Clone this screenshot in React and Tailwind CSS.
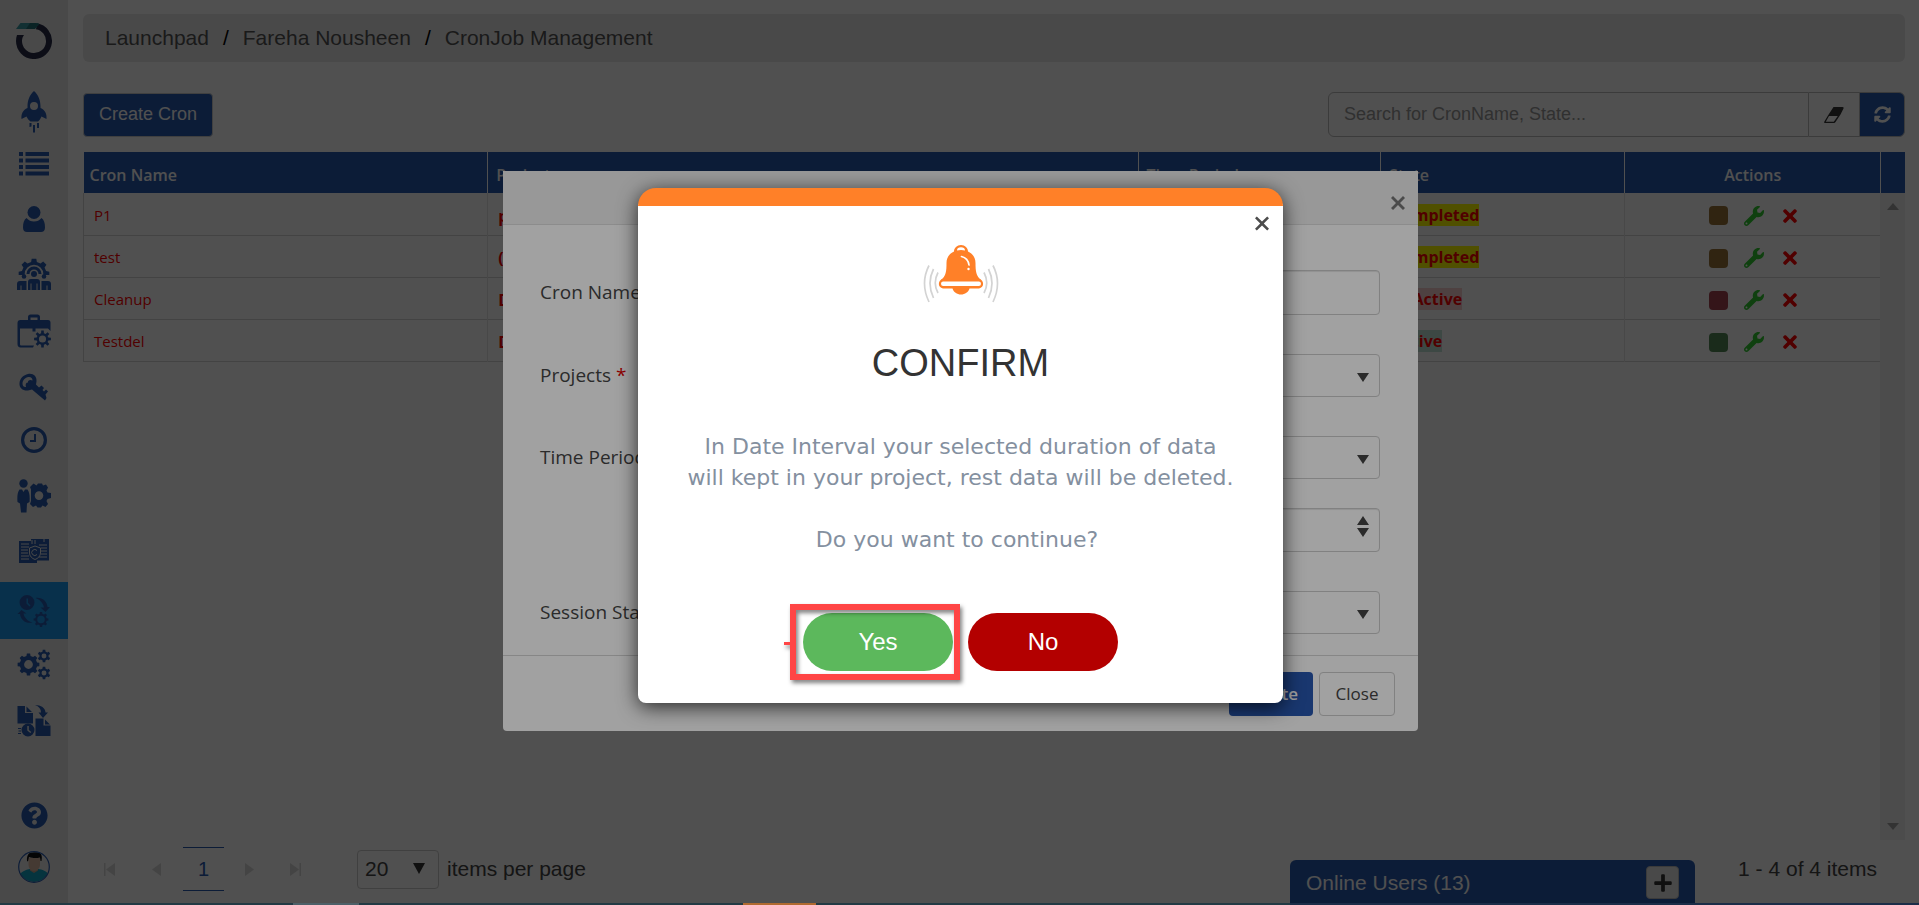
/**
 * CronJob Management — cron list, the create form and its confirm dialog.
 */
import { FaSyncAlt, FaWrench, FaTimes, FaPlus, FaUser, FaQuestionCircle } from "react-icons/fa";

// closed path of a cog with square teeth and a hole
function cogPath(cx, cy, r, teeth = 8, hole = 0.4, root = 0.76) {
  const step = (Math.PI * 2) / teeth;
  const pts = [];
  for (let i = 0; i < teeth; i++) {
    const a = i * step - Math.PI / 2;
    [[-0.3, root], [-0.19, 1], [0.19, 1], [0.3, root]].forEach(([t, k]) => {
      pts.push(`${(cx + Math.cos(a + t * step) * r * k).toFixed(2)} ${(cy + Math.sin(a + t * step) * r * k).toFixed(2)}`);
    });
  }
  const h = r * hole;
  return `M${pts.join("L")}ZM${cx - h} ${cy}a${h} ${h} 0 1 0 ${h * 2} 0a${h} ${h} 0 1 0 ${-h * 2} 0Z`;
}

function Svg({ w = 34, h = 34, children }) {
  return (
    <svg width={w} height={h} viewBox={`0 0 ${w} ${h}`} fill="currentColor" fillRule="evenodd" aria-hidden="true">
      {children}
    </svg>
  );
}

const Logo = () => (
  <Svg w={36} h={36}>
    <path d="M0 18H0C0 15.800 .4 13.800 1 12H8C6.600 13.800 6 15.800 6 18a12 12 0 1 0 14-11.800L21 .3A18 18 0 1 1 0 18Z" fill="#262b48" />
    <path d="M4.500 0H18C20 0 21.500 .2 22.500 .6L18 6H0Z" fill="#3a9aa3" />
    <path d="M14 0H18C20 0 22 .3 23.500 .9L19 6H10Z" fill="#217078" />
  </Svg>
);

const Rocket = () => (
  <Svg w={26} h={42}>
    <path d="M13 0C17.500 4 19.500 9.500 19.500 15.500L19.500 17C24 19 26 22.500 25.500 28L20.500 25.500C19.500 27.500 18.500 29.500 17 30.500H9.500C8 29.500 6.500 27.500 5.500 25.500L.5 28C0 22.500 2 19 6.500 17V15.500C6.500 9.500 8.500 4 13 0ZM13 11a4 4 0 1 0 0 8a4 4 0 1 0 0-8Z" />
    <path d="M8.500 32h2v3.500H9.500V36H8.500ZM16 32h2v5h-2ZM12 34h2v7.500h-2Z" />
  </Svg>
);

const List = () => (
  <Svg w={30} h={24}>
    <path d="M0 0h4v4H0ZM6.500 0H30v4H6.500ZM0 6.500h4v4H0ZM6.500 6.500H30v4H6.500ZM0 13h4v4H0ZM6.500 13H30v4H6.500ZM0 19.500h4v4H0ZM6.500 19.500H30v4H6.500Z" />
  </Svg>
);

// bust with a round head, shoulders flat at the bottom
const User = () => (
  <Svg w={22} h={26}>
    <circle cx="11" cy="6.500" r="6.500" />
    <path d="M3.500 12C5.500 14.500 8 15.500 11 15.500S16.500 14.500 18.500 12C21 13.500 22 17 22 21.500C22 24.500 20.500 26 18 26H4C1.500 26 0 24.500 0 21.500C0 17 1 13.500 3.500 12Z" />
  </Svg>
);

const TeamGear = () => (
  <Svg w={34} h={33}>
    <clipPath id="team-clip"><path d="M0 0H34V17H0Z" /></clipPath>
    <path d={cogPath(17, 16, 15.5, 8, 0.6, 0.8)} clipPath="url(#team-clip)" />
    <path d="M9.500 16a7.500 7.500 0 0 1 15 0h-3a4.500 4.500 0 0 0-9 0Z" />
    <circle cx="17" cy="16" r="3" />
    <circle cx="7" cy="18.500" r="2.300" />
    <circle cx="27" cy="18.500" r="2.300" />
    <path d="M11 32V24C11 22 12 21 14 21H20C22 21 23 22 23 24V32H20.500V25.500h-1V32h-5V25.500h-1V32ZM0 32V26C0 24 1 23 3 23H9.500V32H4.500V27.500h-1V32ZM34 32V26C34 24 33 23 31 23H24.500V32h5V27.500h1V32Z" />
  </Svg>
);

const CaseGear = () => (
  <Svg>
    <path d="M11 6V3C11 1.500 12 .5 13.500 .5h7C22 .5 23 1.500 23 3V6H31C32.700 6 33.500 7 33.500 8.500V17L31 14.500H18.500V17.500H15.500V14.500H3V30C3 31 3.500 31.500 4.500 31.500H17L16 33.500H3.500C1.500 33.500 .5 32 .5 30V9C.5 7 1.500 6 3.500 6ZM13.500 6h7V3.500h-7Z" />
    <path d={cogPath(25.5, 25, 8.5, 8, 0.42, 0.7)} />
  </Svg>
);

const Key = () => (
  <Svg w={30} h={28}>
    <path d="M9 1C14 0 18 3 17.500 8.500L17 11.500L20 14.500L22.500 12.500L25 15L23.500 17L25 18.500L27 16.500L29 18.500L26.500 21.500L27.500 25L26 27.500L13 16.500L9 17.500C4 18 0 15 .5 10C1 5 4.500 2 9 1ZM9.500 4C6 4.500 3.500 7.500 3.500 10.500C3.500 13 5 14.200 7 14C6 11.500 7 9.500 9 9.500C8.500 7.500 11 6 13.500 7.500C13.500 5 12 3.800 9.500 4Z" />
  </Svg>
);

const Clock = () => (
  <Svg w={26} h={26}>
    <path d="M13 0a13 13 0 1 1 0 26a13 13 0 1 1 0-26ZM13 3.200a9.800 9.800 0 1 0 0 19.600a9.800 9.800 0 1 0 0-19.600Z" />
    <path d="M13 7h2v8H9v-2h4Z" />
  </Svg>
);

const PersonGear = () => (
  <Svg>
    <circle cx="6.500" cy="4.500" r="4.200" />
    <path d="M2.500 10.500H5L6.500 13L8 10.500H10.500C12.500 13 13 18 12.500 23L10 24.500L9.500 33.500H4L3 24.500L.5 23C0 18 .5 13 2.500 10.500Z" />
    <path d="M14 10.500L13 8L16.500 4.500L19.500 6.500L21 4.500H25L26 6.500L29 5.500L31 8.500L29.500 11.500L30.500 13.500L34 14V19L30.500 20L29.500 22L31 25L28.500 28L25.500 26.500L24 28.500H20.500L19 26.500L16 28L13 25L14 22ZM22 12.300a4.300 4.300 0 1 0 0 8.600a4.300 4.300 0 1 0 0-8.600Z" />
  </Svg>
);

const License = () => (
  <Svg w={30} h={25}>
    <path d="M0 2H12V0H30V21.500H18V24H0Z" />
    <g stroke="#e9e9e9" strokeWidth="1" fill="none">
      <path d="M2 5h8M2 8h8M2 11h7M2 14h7M2 17h8M2 20h8M20 6h8M22 9h6M22 12h6M22 15h6M20 18h8M13 1v4M16 1v4M25 0v3" />
      <path d="M16 7L21.500 9V14C21.500 17 19 19.500 16 20.500C13 19.500 10.500 17 10.500 14V9Z" />
      <path d="M18 11.500a3 3 0 1 0 0 4" />
    </g>
  </Svg>
);

const CronCycle = () => (
  <Svg>
    <path d="M10 1a7.500 7.500 0 1 1 0 15a7.500 7.500 0 1 1 0-15ZM9.500 4.500V9.500L12.500 12.500L13.500 11.500L11 8.800V4.500Z" />
    <path d="M18.500 4C25 3 30 7 30.500 13H33L28.500 18L23.500 13.500L27 13.500C26 9 23 5.500 18.500 4ZM15.500 28.500C9 30 3.500 26 3 20H.5L4.500 16L9.500 19.500H6.500C7.500 24 11 27.500 15.500 28.500Z" />
    <path d={cogPath(24, 25.5, 7.5, 8, 0.5, 0.78)} />
  </Svg>
);

const Gears = () => (
  <Svg>
    <path d={cogPath(11.5, 15.5, 11, 8, 0.4, 0.8)} />
    <path d={cogPath(27, 7, 6.5, 6, 0.38, 0.72)} />
    <path d={cogPath(27, 24, 6.5, 6, 0.38, 0.72)} />
  </Svg>
);

const FileMove = () => (
  <Svg>
    <path d="M.5 2H8V9H16V19.500H.5ZM9.500 2.500L15 8H9.500Z" />
    <path d="M18.500 14.500H26.500V21.500H33.500V32H18.500ZM28 15.500L33 20.500H28Z" />
    <path d="M18 1C24 1 28.500 4 28.500 8.500H31L26 14L21.500 8.500H24C24 5 22 2.500 18 1Z" />
    <path d="M11 19.500a6.500 6.500 0 1 1 0 13a6.500 6.500 0 1 1 0-13ZM10.300 22v4.500l3 2.500l1-1l-2.500-2V22ZM1 24h3v1H1ZM1.500 26.500h2.500v1H1.500ZM1 29h3v1H1Z" />
  </Svg>
);

const Avatar = () => (
  <Svg w={32} h={32}>
    <clipPath id="avatar-clip"><circle cx="16" cy="16" r="15" /></clipPath>
    <g clipPath="url(#avatar-clip)">
      <path d="M1 32V24C4 20 9 18.500 12 18H20C24 18.500 29 20 31 24V32Z" fill="#13a6c4" />
      <path d="M12 15h8v4.500L16 22L12 19.500Z" fill="#c9a08a" />
      <path d="M10.500 7h11.500v7C22 17 19 20 16 20s-5.500-3-5.500-6Z" fill="#dcb9a4" />
      <path d="M9 10C8.500 4 11 1.500 14 1.500L20 1C23.500 2 24.500 5 23.500 10H22.500L22 6.500C18 7.500 14 7 11 6L10 10.500Z" fill="#111" />
    </g>
    <circle cx="16" cy="16" r="15.300" fill="none" stroke="#2a5cb0" strokeWidth="1.200" />
  </Svg>
);

const Eraser = () => (
  <Svg w={20} h={16}>
    <path d="M9.500 0H18.500Q20 0 19.500 1.500L16.500 7.500L11.500 15Q11 16 10 16H1Q-.2 16 .4 14.600L4 8.500ZM5 9L1.800 14.700H9.800L13.800 9Z" />
  </Svg>
);

const Bell = () => (
  <Svg w={76} h={60}>
    <g fill="none" stroke="#d3d3d3" strokeWidth="1.700">
      <path d="M15 27.500Q9.500 38 15 48M10.500 24Q3.500 38 10.500 53M6 20.500Q-3 38 6 57" />
      <path d="M61 27.500Q66.500 38 61 48M65.500 24Q72.500 38 65.500 53M70 20.500Q79 38 70 57" />
    </g>
    <g fill="#ff8028">
      <path d="M38 0C42 0 45 3 45 6.500C50.500 9 52.500 13.500 52.500 18C52.500 26 53 31 58 35H18C23 31 23.500 26 23.500 18C23.500 13.500 25.500 9 31 6.500C31 3 34 0 38 0ZM34 5.500Q38 4.500 42 5.500C42 3.500 40.500 2.300 38 2.300S34 3.500 34 5.500Z" />
      <path d="M20 33.500H56C61.500 35.500 61.500 42.500 56 43.500H46.500C45.500 47 42 49.500 38 49.500S30.500 47 29.500 43.500H20C14.500 42.500 14.500 35.500 20 33.500Z" />
    </g>
    <rect x="18" y="36.500" width="40" height="4.500" rx="2.200" fill="#fff" />
    <path d="M38.500 11.500Q45 13 46 20" fill="none" stroke="#fff" strokeWidth="1.700" strokeLinecap="round" />
    <circle cx="45.500" cy="24" r="1.200" fill="#fff" />
  </Svg>
);

const NAV = [
  { label: "Launchpad", icon: Rocket, height: "h-[60px]" },
  { label: "Lists", icon: List, height: "h-[44px]" },
  { label: "Profile", icon: User, height: "h-[66px]" },
  { label: "Team settings", icon: TeamGear, height: "h-[44px]" },
  { label: "Projects", icon: CaseGear, height: "h-[70px]" },
  { label: "Keys", icon: Key, height: "h-[42px]" },
  { label: "History", icon: Clock, height: "h-[64px]" },
  { label: "User settings", icon: PersonGear, height: "h-[48px]" },
  { label: "Licenses", icon: License, height: "h-[62px]" },
  { label: "CronJob Management", icon: CronCycle, height: "h-[57px]", active: true },
  { label: "Settings", icon: Gears, height: "h-[54px]" },
  { label: "File transfer", icon: FileMove, height: "h-[56px]" },
];

const CRONS = [
  { name: "P1", project: "p1", period: "30 Days", state: "Completed", mark: "bg-[#ffff00]", box: "bg-[#997438]" },
  { name: "test", project: "(test)", period: "1 Month", state: "Completed", mark: "bg-[#ffff00]", box: "bg-[#997438]" },
  { name: "Cleanup", project: "Demo", period: "7 Days", state: "In Active", mark: "bg-[#f8cfcf]", box: "bg-[#a54352]" },
  { name: "Testdel", project: "Demo", period: "7 Days", state: "Active", mark: "bg-[#c3e6d8]", box: "bg-[#548a58]" },
];

function Sidebar() {
  return (
    <nav className="w-[68px] shrink-0 bg-[#e9e9e9] text-[#275ab0] flex flex-col items-center">
      <a href="#" aria-label="Home" className="h-[82px] flex items-center">
        <Logo />
      </a>
      {NAV.map(({ label, icon: Icon, height, active }) => (
        <a
          key={label}
          href="#"
          aria-label={label}
          className={`${height} w-full shrink-0 flex items-center justify-center ${active ? "bg-[#1a9aee]" : ""}`}
        >
          <Icon />
        </a>
      ))}
      <a href="#" aria-label="Help" className="mt-auto">
        <FaQuestionCircle size={27} />
      </a>
      <button aria-label="Account" className="mt-[22px] mb-[22px]">
        <Avatar />
      </button>
    </nav>
  );
}

function CronTable() {
  return (
    <div className="flex-1 flex mt-[15px] font-['Open_Sans',sans-serif] text-[15px]">
      <div className="flex-1">
        <table className="w-full table-fixed border-collapse">
          <thead>
            <tr className="h-[41px] bg-[#275ab0] text-white text-left text-[16px]">
              <th className="w-[22.5%] font-semibold pl-1.5 pt-1">Cron Name</th>
              <th className="w-[36.2%] font-semibold pl-2 pt-1 border-l border-white">Projects</th>
              <th className="w-[13.5%] font-semibold pl-2 pt-1 border-l border-white">Time Period</th>
              <th className="w-[13.6%] font-semibold pl-2 pt-1 border-l border-white">State</th>
              <th className="w-[14.2%] font-semibold pt-1 text-center border-l border-white">Actions</th>
            </tr>
          </thead>
          <tbody>
            {CRONS.map((cron) => (
              <tr key={cron.name} className="h-[42px] border-b border-[#d5d5d5] text-[#ff0000]">
                <td className="pl-2.5 pt-0.5 border-l border-[#d5d5d5]">{cron.name}</td>
                <td className="pl-2.5 pt-1 text-[16px] font-bold border-l border-[#e4e4e4]">{cron.project}</td>
                <td className="pl-3 pt-1">{cron.period}</td>
                <td className="pl-3 pt-0.5 text-[16px] font-bold">
                  <span className={cron.mark}>{cron.state}</span>
                </td>
                <td className="border-l border-[#e4e4e4] pt-1 pl-1">
                  <div className="flex items-center justify-center gap-4">
                    <button aria-label={`State of ${cron.name}`} className={`w-[19px] h-[19px] rounded-sm ${cron.box}`} />
                    <button aria-label={`Edit ${cron.name}`} className="text-[#32cd32]">
                      <FaWrench size={20} />
                    </button>
                    <button aria-label={`Delete ${cron.name}`}>
                      <FaTimes size={20} />
                    </button>
                  </div>
                </td>
              </tr>
            ))}
          </tbody>
        </table>
      </div>
      <div className="w-[25px] flex flex-col">
        <div className="h-[41px] bg-[#275ab0] border-l border-white" />
        <div className="flex-1 bg-[#f1f1f1] flex flex-col items-center justify-between py-[10px] text-[#a3a3a3]">
          <Svg w={12} h={7}><path d="M6 0L12 7H0Z" /></Svg>
          <Svg w={12} h={7}><path d="M0 0H12L6 7Z" /></Svg>
        </div>
      </div>
    </div>
  );
}

function Pager() {
  return (
    <div className="h-[65px] bg-[#fdfdfd] flex items-center pb-[7px] text-[21px] text-[#444]">
      <div className="flex items-center text-[#d8d8d8] pl-[21px]">
        <button aria-label="First page"><Svg w={12} h={13}><path d="M0 0h1.500v13H0ZM11 0V13L2 6.500Z" /></Svg></button>
        <button aria-label="Previous page" className="ml-[36px]"><Svg w={9} h={13}><path d="M9 0V13L0 6.500Z" /></Svg></button>
        <button className="ml-[22px] w-[41px] h-[44px] text-center text-[20px] text-[#275ab0] border-y border-[#275ab0]">1</button>
        <button aria-label="Next page" className="ml-[21px]"><Svg w={9} h={13}><path d="M0 0V13L9 6.500Z" /></Svg></button>
        <button aria-label="Last page" className="ml-[35px]"><Svg w={12} h={13}><path d="M10.500 0H12v13h-1.500ZM1 0V13L10 6.500Z" /></Svg></button>
      </div>
      <label className="ml-[56px] flex items-center gap-[8px]">
        <span className="relative flex items-center">
          <select className="appearance-none w-[82px] h-[39px] pl-[7px] border border-[#ccc] rounded-sm text-[21px]">
            <option>20</option>
          </select>
          <span className="absolute right-[14px] top-[13px] text-[#333] pointer-events-none">
            <Svg w={12} h={11}><path d="M0 0H12L6 11Z" /></Svg>
          </span>
        </span>
        items per page
      </label>
      <span className="ml-auto pr-[28px]">1 - 4 of 4 items</span>
    </div>
  );
}

function FieldRow({ label, id, required, children }) {
  return (
    <div className="flex items-center">
      <label htmlFor={id} className="w-[170px] shrink-0">
        {label} {required && <span className="text-[#e00000]">*</span>}
      </label>
      <div className="flex-1 relative">{children}</div>
    </div>
  );
}

function DropDown({ id }) {
  return (
    <>
      <select id={id} className="appearance-none w-full h-[43px] border border-[#ccc] rounded-sm block">
        <option></option>
      </select>
      <span className="absolute right-[11px] top-[19px] text-[#444] pointer-events-none">
        <Svg w={12} h={9}><path d="M0 0H12L6 9Z" /></Svg>
      </span>
    </>
  );
}

function CreateCronModal() {
  return (
    <div className="fixed inset-0 bg-black/50 flex justify-center items-start pt-[171px] pl-0.5">
      <section className="w-[915px] bg-white rounded-sm font-['Open_Sans',sans-serif] text-[19px] text-[#444]">
        <header className="h-[54px] bg-[#f1f1f1] border-b border-[#dedede] flex items-center justify-end pr-[13px] text-[#777]">
          <button aria-label="Close form" className="pt-2.5">
            <Svg w={14} h={14}><path d="M2 0L7 5L12 0L14 2L9 7L14 12L12 14L7 9L2 14L0 12L5 7L0 2Z" /></Svg>
          </button>
        </header>
        <div className="pt-[45px] pb-[21px] pl-[37px] pr-[38px] flex flex-col gap-[39px]">
          <FieldRow label="Cron Name" id="cron-name" required>
            <input id="cron-name" className="w-full h-[45px] border border-[#ccc] rounded block px-3 shadow-[inset_0_1px_1px_rgba(0,0,0,0.1)]" />
          </FieldRow>
          <FieldRow label="Projects" id="projects" required>
            <DropDown id="projects" />
          </FieldRow>
          <div className="flex flex-col gap-[29px]">
            <FieldRow label="Time Period" id="period" required>
              <DropDown id="period" />
            </FieldRow>
            <div className="pl-[170px] relative">
              <input aria-label="Duration" className="w-full h-[44px] border border-[#ccc] rounded-sm block px-3 shadow-[inset_0_1px_1px_rgba(0,0,0,0.1)]" />
              <button aria-label="Change duration" className="absolute right-[11px] top-[8px] text-[#444]">
                <Svg w={12} h={21}><path d="M6 0L12 9H0ZM0 12H12L6 21Z" /></Svg>
              </button>
            </div>
          </div>
          <FieldRow label="Session State" id="state" required>
            <DropDown id="state" />
          </FieldRow>
        </div>
        <footer className="h-[76px] border-t border-[#d5d5d5] flex items-center justify-end gap-[6px] pr-[23px] text-[17px]">
          <button className="w-[84px] h-[44px] rounded bg-[#2857b0] text-white font-semibold">Create</button>
          <button className="w-[76px] h-[44px] rounded border border-[#ccc]">Close</button>
        </footer>
      </section>
    </div>
  );
}

function ConfirmDialog() {
  return (
    <div className="fixed inset-0 bg-black/37 flex justify-center items-start pt-[188px] pl-0.5">
      <section
        role="dialog"
        aria-labelledby="confirm-title"
        className="relative w-[645px] bg-white border-t-[18px] border-[#ff8028] rounded-t-[18px] rounded-b-lg shadow-[0_4px_20px_rgba(0,0,0,0.75)] flex flex-col items-center"
      >
        <button aria-label="Dismiss" className="absolute right-[14px] top-[10px] text-[#4c4c4c]">
          <Svg w={14} h={15}><path d="M1.800 .4L7 5.600L12.200 .4L14 2.200L8.800 7.500L14 12.800L12.200 14.600L7 9.400L1.800 14.600L0 12.800L5.200 7.500L0 2.200Z" /></Svg>
        </button>
        <div className="mt-[39px]">
          <Bell />
        </div>
        <h1 id="confirm-title" className="mt-[33px] text-[38px] leading-[50px] text-[#333]">CONFIRM</h1>
        <p className="mt-[43px] font-['DejaVu_Sans',sans-serif] text-[22px] leading-[31px] text-center text-[#84909f]">
          In Date Interval your selected duration of data
          <br />
          will kept in your project, rest data will be deleted.
          <br />
          <br />
          Do you want to continue?&nbsp;
        </p>
        <div className="mt-[58px] mb-8 flex gap-[15px] text-[24px] text-white">
          <div className="relative">
            <button className="block w-[150px] h-[58px] rounded-full bg-[#5cb85c]">Yes</button>
            <div className="absolute -left-[13px] -top-[9px] w-[170px] h-[76px] border-[6px] border-[#ff4545] pointer-events-none drop-shadow-[2px_3px_2px_rgba(0,0,0,0.5)]">
              <div className="absolute -left-[12px] top-[32px] w-[6px] h-[3px] bg-[#ff4545]" />
            </div>
          </div>
          <button className="w-[150px] h-[58px] rounded-full bg-[#b30000]">No</button>
        </div>
      </section>
    </div>
  );
}

export default function App() {
  return (
    <div className="h-screen flex overflow-hidden bg-white font-['Liberation_Sans',Arial,sans-serif]">
      <Sidebar />
      <main className="flex-1 min-w-0 flex flex-col pl-[15px] pr-[14px] pt-[14px]">
        <nav className="h-12 rounded-md bg-[#e9e9e9] flex items-center gap-[14px] px-[22px] text-[21px] text-[#555]">
          <a href="#">Launchpad</a>
          <span className="text-black">/</span>
          <a href="#">Fareha Nousheen</a>
          <span className="text-black">/</span>
          <a href="#">CronJob Management</a>
        </nav>

        <div className="mt-[30px] flex items-center justify-between text-[18px]">
          <button className="w-[130px] h-[44px] rounded bg-[#275ab0] text-white border border-[#ccc]">Create Cron</button>
          <div className="w-[577px] h-[45px] flex">
            <input
              aria-label="Search crons"
              placeholder="Search for CronName, State..."
              className="flex-1 min-w-0 h-full px-[15px] border border-[#bbb] rounded-l-md placeholder:text-[#999]"
            />
            <button aria-label="Clear search" className="w-[50px] h-full border-y border-[#bbb] flex items-center justify-center text-[#333]">
              <Eraser />
            </button>
            <button aria-label="Refresh" className="w-[46px] h-full rounded-r-md bg-[#275ab0] text-white border border-[#bbb] flex items-center justify-center">
              <FaSyncAlt size={17} />
            </button>
          </div>
        </div>

        <CronTable />
        <Pager />
      </main>

      <aside className="fixed bottom-0 right-[224px] w-[405px] h-[45px] rounded-t-md bg-[#275ab0] text-white flex items-center justify-between pl-[16px] pr-[16px] text-[21px]">
        Online Users (13)
        <button aria-label="Expand online users" className="w-[33px] h-[33px] rounded bg-[#e9e9e9] border border-[#bbb] text-[#333] flex items-center justify-center">
          <FaPlus size={20} />
        </button>
      </aside>

      <CreateCronModal />
      <ConfirmDialog />

      {/* edge of the desktop taskbar */}
      <div className="fixed bottom-0 inset-x-0 h-0.5 flex">
        <div className="w-[293px] bg-[#233a44]" />
        <div className="w-[66px] bg-[#4d6068]" />
        <div className="w-[384px] bg-[#233a44]" />
        <div className="w-[73px] bg-[#b06a30]" />
        <div className="w-[474px] bg-[#233a44]" />
        <div className="flex-1 bg-[#1b2d48]" />
      </div>
    </div>
  );
}
